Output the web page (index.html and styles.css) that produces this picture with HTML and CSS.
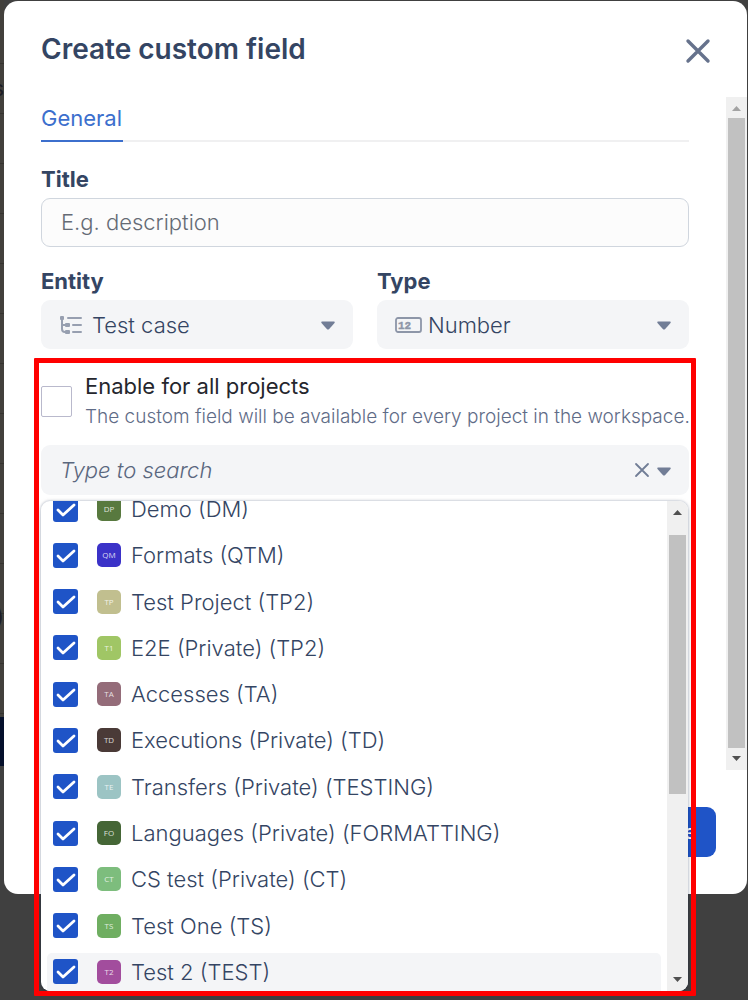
FILE: index.html
```html
<!DOCTYPE html>
<html lang="en">
<head>
<meta charset="utf-8">
<meta name="viewport" content="width=device-width, initial-scale=1">
<title>Create custom field</title>
<link rel="stylesheet" href="styles.css">
</head>
<body>
<div class="page">
  <div class="backdrop" aria-hidden="true">
    <span class="backdrop-text backdrop-text-case">s</span>
    <span class="backdrop-text backdrop-text-paren">)</span>
    <span class="backdrop-bar"></span>
  </div>
  <form class="modal" role="dialog" aria-labelledby="modal-title">
    <header class="modal-header">
      <h1 class="modal-title" id="modal-title">Create custom field</h1>
      <button class="close" type="button" aria-label="Close">
        <svg width="26" height="26" viewBox="0 0 26 26"><path d="M3 3l20 20M23 3L3 23" fill="none" stroke="#66728c" stroke-width="3.4" stroke-linecap="round"/></svg>
      </button>
    </header>

    <div class="scroll-area">
      <div class="content">
        <nav class="tabs"><a class="tab" href="#general">General</a></nav>

        <div class="field">
          <label class="label" for="title">Title</label>
          <input class="input" id="title" type="text" placeholder="E.g. description">
        </div>

        <div class="columns">
          <div class="field">
            <label class="label" for="entity">Entity</label>
            <div class="select-box">
              <svg class="select-icon" width="27" height="20" viewBox="0 0 27 20"><g fill="none" stroke="#979fb0" stroke-width="2"><path d="M3 3v11q0 3 3 3h3M3 10h5"/><path d="M9 3h13M14 10h8M14 17h8" stroke-linecap="round"/></g><g fill="#979fb0"><rect x="1" y="1" width="4" height="4" rx="1"/><rect x="6" y="8" width="5" height="4" rx="1"/><rect x="6" y="15" width="5" height="4" rx="1"/></g></svg>
              <select class="select" id="entity"><option>Test case</option></select>
              <svg class="caret" width="14" height="11" viewBox="0 -2 14 11"><path d="M1 0.500h12q1.200 0.500 0.500 1.500L8.200 8q-1.200 1-2.400 0L0.500 2Q-0.200 1 1 0.500z" fill="#717d96"/></svg>
            </div>
          </div>
          <div class="field">
            <label class="label" for="type">Type</label>
            <div class="select-box">
              <svg class="select-icon" width="27" height="18" viewBox="0 0 27 18"><rect x="1" y="2" width="25" height="14" rx="2" fill="none" stroke="#8d96a8" stroke-width="1.800"/><text class="icon-digits" x="3" y="13">12</text></svg>
              <select class="select" id="type"><option>Number</option></select>
              <svg class="caret" width="14" height="11" viewBox="0 -2 14 11"><path d="M1 0.500h12q1.200 0.500 0.500 1.500L8.200 8q-1.200 1-2.400 0L0.500 2Q-0.200 1 1 0.500z" fill="#717d96"/></svg>
            </div>
          </div>
        </div>

        <section class="projects">
          <div class="enable">
            <input class="enable-check" id="enable-all" type="checkbox" aria-describedby="enable-hint">
            <div class="enable-text">
              <label class="enable-label" for="enable-all">Enable for all projects</label>
              <p class="enable-hint" id="enable-hint">The custom field will be available for every project in the workspace.</p>
            </div>
          </div>

          <div class="combo">
            <input class="combo-input" type="text" placeholder="Type to search" aria-label="Projects">
            <button class="icon-button" type="button" aria-label="Clear">
              <svg width="16" height="16" viewBox="0 0 16 16"><path d="M2 2l12 12M14 2L2 14" fill="none" stroke="#717d96" stroke-width="1.800" stroke-linecap="round"/></svg>
            </button>
            <button class="icon-button" type="button" aria-label="Toggle list">
              <svg width="14" height="11" viewBox="0 -2 14 11"><path d="M1 0.500h12q1.200 0.500 0.500 1.500L8.200 8q-1.200 1-2.400 0L0.500 2Q-0.200 1 1 0.500z" fill="#717d96"/></svg>
            </button>

            <div class="dropdown">
              <div class="options">
                <label class="option"><input class="check" type="checkbox" checked><span class="badge badge-dp">DP</span>Demo (DM)</label>
                <label class="option"><input class="check" type="checkbox" checked><span class="badge badge-qm">QM</span>Formats (QTM)</label>
                <label class="option"><input class="check" type="checkbox" checked><span class="badge badge-tp">TP</span>Test Project (TP2)</label>
                <label class="option"><input class="check" type="checkbox" checked><span class="badge badge-t1">T1</span>E2E (Private) (TP2)</label>
                <label class="option"><input class="check" type="checkbox" checked><span class="badge badge-ta">TA</span>Accesses (TA)</label>
                <label class="option"><input class="check" type="checkbox" checked><span class="badge badge-td">TD</span>Executions (Private) (TD)</label>
                <label class="option"><input class="check" type="checkbox" checked><span class="badge badge-te">TE</span>Transfers (Private) (TESTING)</label>
                <label class="option"><input class="check" type="checkbox" checked><span class="badge badge-fo">FO</span>Languages (Private) (FORMATTING)</label>
                <label class="option"><input class="check" type="checkbox" checked><span class="badge badge-ct">CT</span>CS test (Private) (CT)</label>
                <label class="option"><input class="check" type="checkbox" checked><span class="badge badge-ts">TS</span>Test One (TS)</label>
                <label class="option option-active"><input class="check" type="checkbox" checked><span class="badge badge-t2">T2</span>Test 2 (TEST)</label>
              </div>
              <div class="scrollbar scrollbar-list" aria-hidden="true">
                <svg class="arrow" width="9" height="5" viewBox="0 0 9 5"><path d="M0 5L4.500 0 9 5z" fill="#505050"/></svg>
                <span class="thumb"></span>
                <svg class="arrow" width="9" height="5" viewBox="0 0 9 5"><path d="M0 0h9L4.500 5z" fill="#505050"/></svg>
              </div>
            </div>
          </div>
          <div class="highlight" aria-hidden="true"></div>
        </section>
      </div>
      <div class="scrollbar" aria-hidden="true">
        <svg class="arrow" width="9" height="5" viewBox="0 0 9 5"><path d="M0 5L4.500 0 9 5z" fill="#a3a3a3"/></svg>
        <span class="thumb"></span>
        <svg class="arrow" width="9" height="5" viewBox="0 0 9 5"><path d="M0 0h9L4.500 5z" fill="#505050"/></svg>
      </div>
    </div>

    <footer class="modal-footer">
      <button class="submit" type="submit">Create</button>
    </footer>
  </form>
</div>
</body>
</html>
```
FILE: styles.css
```css
* {
  box-sizing: border-box;
}

body {
  margin: 0;
  font-family: Inter, "Liberation Sans", sans-serif;
  font-size: 22px;
  color: #344563;
  background: #404040;
}

input,
select,
button {
  margin: 0;
  padding: 0;
  border: 0;
  background: none;
  font: inherit;
  color: inherit;
}

svg {
  display: block;
}

.page {
  position: relative;
  min-height: 100vh;
  padding: 1px 1px 0 4px;
  overflow: hidden;
}

/* Dimmed page behind the dialog */
.backdrop {
  position: absolute;
  top: 0;
  left: 0;
  width: 4px;
  height: 766px;
  overflow: hidden;
  background: repeating-linear-gradient(#42403c 0 49px, #35332f 49px 50px) 0 14px;
}

.backdrop-text {
  position: absolute;
  right: 0;
  line-height: 24px;
  color: #1c1c24;
}

.backdrop-text-case {
  top: 76px;
}

.backdrop-text-paren {
  top: 604px;
}

.backdrop-bar {
  position: absolute;
  left: 0;
  bottom: 0;
  width: 100%;
  height: 49px;
  background: #05102b;
}

.modal {
  position: relative;
  display: flex;
  flex-direction: column;
  background: #fff;
  border-radius: 14px;
}

.modal-header {
  display: flex;
  align-items: flex-start;
  justify-content: space-between;
  height: 96px;
  padding: 31px 36px 0 37px;
}

.modal-title {
  margin: 0;
  font-size: 28px;
  font-weight: 600;
  line-height: 34px;
}

.close {
  padding-top: 6px;
}

.scroll-area {
  display: flex;
}

.content {
  flex: 1;
  min-width: 0;
  padding: 0 37px 275px;
}

.tabs {
  display: flex;
  height: 45px;
  border-bottom: 2px solid #f0f0f1;
}

.tab {
  height: 45px;
  padding: 7px 1px 0 0;
  border-bottom: 2px solid #3c6fcd;
  line-height: 28px;
  color: #3c6fcd;
  text-decoration: none;
}

.field {
  display: flex;
  flex-direction: column;
  flex: 1;
  min-width: 0;
  padding-top: 24px;
}

.columns {
  display: flex;
  gap: 24px;
  margin-top: -3px;
}

.label {
  height: 32px;
  line-height: 27px;
  font-weight: 700;
}

.input {
  width: 100%;
  height: 49px;
  padding: 0 19px 2px;
  border: 1px solid #d0d6de;
  border-radius: 9px;
  background: #fcfcfc;
  font-weight: 300;
}

.input::placeholder {
  color: #656b75;
  opacity: 1;
}

.select-box {
  position: relative;
  display: flex;
  align-items: center;
  gap: 6px;
  height: 49px;
  padding: 0 18px;
  border-radius: 9px;
  background: #f4f5f7;
}

.select-icon {
  flex: none;
}

.icon-digits {
  font-family: "Liberation Mono", monospace;
  font-size: 11px;
  font-weight: 700;
  fill: #8d96a8;
  stroke: #8d96a8;
  stroke-width: 0.4px;
}

.select {
  flex: 1;
  min-width: 0;
  height: 49px;
  font-weight: 300;
  appearance: none;
}

.caret {
  flex: none;
}

.projects {
  position: relative;
  padding-top: 23px;
}

.enable {
  display: flex;
  align-items: center;
  gap: 13px;
  height: 59px;
}

.enable-check {
  flex: none;
  width: 31px;
  height: 31px;
  border: 1px solid #b9b9cc;
  border-radius: 2px;
  background: #fff;
  appearance: none;
}

.enable-text {
  white-space: nowrap;
}

.enable-label {
  display: block;
  line-height: 30px;
  color: #25262d;
}

.enable-hint {
  margin: 0;
  font-size: 19px;
  font-weight: 300;
  line-height: 32px;
  color: #5f6c87;
}

.combo {
  position: relative;
  display: flex;
  align-items: center;
  gap: 7px;
  height: 50px;
  margin-top: 14px;
  padding: 0 18px 0 19px;
  border-radius: 9px;
  background: #f4f5f7;
}

.combo-input {
  flex: 1;
  min-width: 0;
  height: 50px;
  font-weight: 300;
}

.combo-input::placeholder {
  font-style: italic;
  color: #5a677e;
  opacity: 1;
}

.dropdown {
  position: absolute;
  z-index: 2;
  top: 56px;
  left: 0;
  right: 1px;
  display: flex;
  align-items: flex-end;
  height: 490px;
  overflow: hidden;
  border-radius: 9px;
  background: #fff;
  box-shadow: 0 0 2px 1px rgba(9, 30, 66, 0.16), 0 3px 8px rgba(9, 30, 66, 0.12);
}

.options {
  display: flex;
  flex: 1;
  flex-direction: column;
  justify-content: space-between;
  height: 501px;
  padding: 0 6px;
}

.option {
  display: flex;
  flex: none;
  align-items: center;
  height: 38px;
  padding: 0 6px;
  font-weight: 300;
  white-space: nowrap;
}

.option-active {
  border-radius: 5px 5px 0 0;
  background: #f4f5f7;
}

.check {
  width: 25px;
  height: 25px;
  border-radius: 3px;
  background: #1f54c7 url("data:image/svg+xml,%3Csvg xmlns='http://www.w3.org/2000/svg' viewBox='0 0 25 25'%3E%3Cpath d='M5 13l5 5L21 8' fill='none' stroke='white' stroke-width='2.8' stroke-linecap='round' stroke-linejoin='round'/%3E%3C/svg%3E");
  appearance: none;
}

.badge {
  width: 24px;
  height: 24px;
  margin: 0 10px 0 19px;
  border-radius: 5px;
  font-family: "Open Sans", "Noto Sans", sans-serif;
  font-size: 8px;
  font-weight: 400;
  line-height: 24px;
  text-align: center;
  color: rgba(255, 255, 255, 0.8);
}

.badge-dp { background: #58793f; }
.badge-qm { background: #3b32c8; }
.badge-tp { background: #c1bf8f; }
.badge-t1 { background: #a0c665; }
.badge-ta { background: #946c79; }
.badge-td { background: #4a3a37; }
.badge-te { background: #9cc4c4; }
.badge-fo { background: #456636; }
.badge-ct { background: #7dbd7d; }
.badge-ts { background: #6fae61; }
.badge-t2 { background: #a24d9d; }

.scrollbar {
  display: flex;
  flex: none;
  flex-direction: column;
  align-items: center;
  width: 21px;
  padding: 9px 2px;
  background: #f0f0f0;
}

.scrollbar .thumb {
  flex: 1;
  width: 17px;
  margin: 7px 0 8px;
  background: #c1c1c1;
}

.scrollbar-list {
  align-self: stretch;
  justify-content: space-between;
}

.scrollbar-list .thumb {
  flex: none;
  height: 259px;
  margin: 20px 0 auto;
}

/* Callout frame around the project picker */
.highlight {
  position: absolute;
  z-index: 3;
  top: 9px;
  left: -7px;
  right: -7px;
  height: 638px;
  border: 5px solid #f00;
  border-radius: 1px;
  pointer-events: none;
}

.modal-footer {
  display: flex;
  justify-content: flex-end;
  padding: 37px 31px;
}

.submit {
  height: 50px;
  padding: 0 20px;
  border-radius: 9px;
  background: #1f54c7;
  font-size: 20px;
  font-weight: 500;
  color: #fff;
}
```
